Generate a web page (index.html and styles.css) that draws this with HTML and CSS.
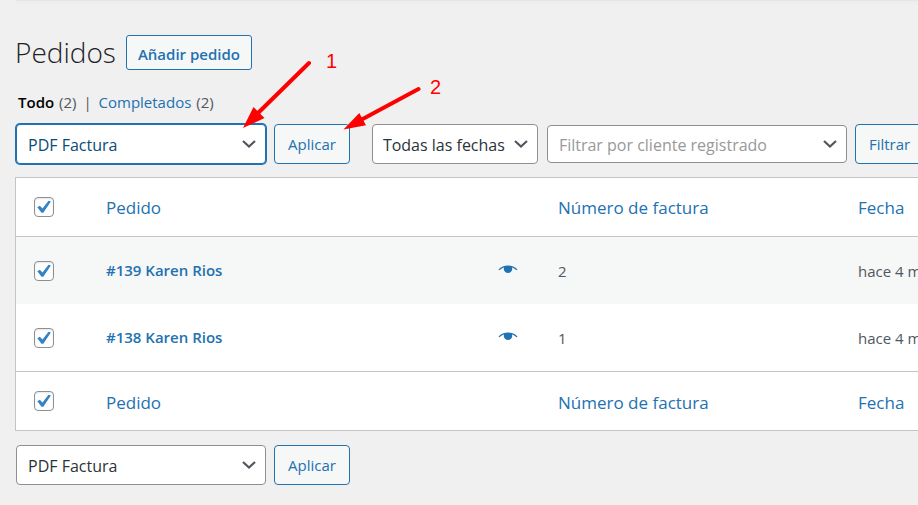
FILE: index.html
```html
<!DOCTYPE html>
<html lang="es">
<head>
    <meta charset="UTF-8">
    <meta name="viewport" content="width=device-width, initial-scale=1.0">
    <title>Pedidos</title>
    <link rel="stylesheet" href="styles.css">
</head>
<body>
    <div class="top-panel"></div>
    <main class="wrap">
        <header class="page-header">
            <h1>Pedidos</h1>
            <button type="button" class="button add-button">Añadir pedido</button>
        </header>
        <nav class="status-links">
            <a href="#" class="current">Todo</a> <span class="count">(2)</span>
            <span class="divider">|</span>
            <a href="#">Completados</a> <span class="count">(2)</span>
        </nav>
        <form class="tablenav">
            <select class="bulk-select focused" aria-label="Acciones en lote">
                <option>PDF Factura</option>
            </select>
            <button type="button" class="button">Aplicar</button>
            <select class="date-select" aria-label="Filtrar por fecha">
                <option>Todas las fechas</option>
            </select>
            <select class="customer-select" aria-label="Filtrar por cliente registrado">
                <option>Filtrar por cliente registrado</option>
            </select>
            <button type="button" class="button">Filtrar</button>
        </form>
        <table class="orders">
            <thead>
                <tr>
                    <th class="col-check"><input type="checkbox" aria-label="Seleccionar todo" checked></th>
                    <th><a href="#">Pedido</a></th>
                    <th class="col-invoice"><a href="#">Número de factura</a></th>
                    <th class="col-date"><a href="#">Fecha</a></th>
                </tr>
            </thead>
            <tbody>
                <tr>
                    <td><input type="checkbox" aria-label="Seleccionar pedido 139" checked></td>
                    <td>
                        <div class="order-cell">
                            <a href="#" class="order-link">#139 Karen Rios</a>
                            <a href="#" class="preview" aria-label="Vista previa">
                                <svg width="20" height="10" viewBox="0 0 20 10"><path d="M.5 4.500C3 1.800 6.300.5 10 .5s7 1.300 9.500 4l-.8.8C17.300 3.900 15.800 3 14 2.400c.1.500.2 1 .2 1.500a4.200 4.200 0 0 1-8.400 0c0-.5.1-1 .2-1.500C4.200 3 2.700 3.900 1.300 5.300z"/></svg>
                            </a>
                        </div>
                    </td>
                    <td>2</td>
                    <td>hace 4 meses</td>
                </tr>
                <tr>
                    <td><input type="checkbox" aria-label="Seleccionar pedido 138" checked></td>
                    <td>
                        <div class="order-cell">
                            <a href="#" class="order-link">#138 Karen Rios</a>
                            <a href="#" class="preview" aria-label="Vista previa">
                                <svg width="20" height="10" viewBox="0 0 20 10"><path d="M.5 4.500C3 1.800 6.300.5 10 .5s7 1.300 9.500 4l-.8.8C17.300 3.900 15.800 3 14 2.400c.1.500.2 1 .2 1.500a4.200 4.200 0 0 1-8.400 0c0-.5.1-1 .2-1.500C4.200 3 2.700 3.900 1.300 5.300z"/></svg>
                            </a>
                        </div>
                    </td>
                    <td>1</td>
                    <td>hace 4 meses</td>
                </tr>
            </tbody>
            <tfoot>
                <tr>
                    <th><input type="checkbox" aria-label="Seleccionar todo" checked></th>
                    <th><a href="#">Pedido</a></th>
                    <th><a href="#">Número de factura</a></th>
                    <th><a href="#">Fecha</a></th>
                </tr>
            </tfoot>
        </table>
        <form class="tablenav bottom">
            <select class="bulk-select" aria-label="Acciones en lote">
                <option>PDF Factura</option>
            </select>
            <button type="button" class="button">Aplicar</button>
        </form>
    </main>
    <!-- numbered steps drawn over the page -->
    <svg class="steps" width="460" height="140" viewBox="0 0 460 140">
        <path class="line" d="M309 63L256 115M418.500 89L359 121"/>
        <path d="M243 128L253.500 107L264.500 118ZM343.500 129.500L359.300 113L366 125.200Z"/>
        <text x="326" y="68">1</text>
        <text x="430" y="94">2</text>
    </svg>
</body>
</html>
```

FILE: styles.css
```css
* {
    box-sizing: border-box;
}
body {
    margin: 0;
    background: #f0f0f0;
    color: #50575e;
    font-family: "Open Sans", "Noto Sans", sans-serif;
    font-size: 15px;
    overflow: hidden;
    position: relative;
}
a {
    color: #2271b1;
    text-decoration: none;
}
.top-panel {
    height: 1px;
    margin-left: 16px;
    background: #e6e6e6;
    box-shadow: 0 1px 4px rgba(0, 0, 0, 0.08);
}
.wrap {
    padding: 34px 0 20px 15px;
}
.page-header {
    display: flex;
    align-items: center;
    gap: 10px;
}
h1 {
    margin: 0;
    color: #1d2327;
    font-size: 28px;
    font-weight: 360;
    line-height: 35px;
}
.button {
    flex: none;
    height: 40px;
    padding: 0 13px;
    border: 1px solid #2271b1;
    border-radius: 4px;
    background: #f6f7f7;
    color: #2271b1;
    font-family: inherit;
    font-size: 15px;
    cursor: pointer;
}
.add-button {
    height: 35px;
    padding: 2px 11px 0;
    border-radius: 3px;
    font-weight: 600;
}
.status-links {
    margin: 20px 0 9px 3px;
    line-height: 24px;
}
.status-links .current {
    color: #000;
    font-weight: 600;
}
.count {
    margin-left: 1px;
}
.divider {
    margin: 0 3px;
}
.tablenav {
    display: flex;
    align-items: center;
    gap: 8px;
    height: 42px;
    padding-left: 1px;
}
select {
    flex: none;
    appearance: none;
    height: 40px;
    padding: 1px 30px 0 11px;
    border: 1px solid #8c8f94;
    border-radius: 4px;
    background: #fff url('data:image/svg+xml;utf8,<svg xmlns="http://www.w3.org/2000/svg" width="16" height="10" viewBox="0 0 16 10"><path d="M2 2l6 5.500L14 2" fill="none" stroke="%2350575e" stroke-width="2.200"/></svg>') no-repeat right 8px center;
    color: #2c3338;
    font-family: inherit;
    font-size: 16px;
}
.bulk-select {
    width: 250px;
}
.focused {
    border-color: #2271b1;
    box-shadow: 0 0 0 1px #2271b1;
    color: #0a4b78;
}
.date-select {
    width: 166px;
    margin: 0 1px 0 14px;
    padding: 1px 10px 0;
}
.customer-select {
    width: 300px;
    height: 38px;
    color: #999;
}
.orders {
    width: 100%;
    margin-top: 12px;
    table-layout: fixed;
    border-collapse: separate;
    border-spacing: 0;
    border: 1px solid #c3c4c7;
    border-right: 0;
    background: #fff;
}
.orders th,
.orders td {
    padding: 0 0 0 16px;
    text-align: left;
    white-space: nowrap;
}
.orders th {
    height: 59px;
    font-size: 17px;
    font-weight: 380;
}
.orders td {
    height: 67px;
}
.orders thead th {
    border-bottom: 1px solid #c3c4c7;
}
.orders tfoot th {
    border-top: 1px solid #c3c4c7;
    padding-top: 3px;
}
.orders tbody tr:first-child {
    background: #f6f7f7;
}
.orders .col-check {
    width: 74px;
}
.orders .col-invoice {
    width: 300px;
}
.orders .col-date {
    width: 76px;
}
.orders th:first-child,
.orders td:first-child {
    padding: 0 0 0 18px;
}
.order-cell {
    display: flex;
    align-items: center;
    justify-content: space-between;
    padding: 0 24px 2px 0;
}
.order-link {
    font-weight: 600;
}
.preview svg {
    display: block;
    fill: #2271b1;
}
input[type="checkbox"] {
    appearance: none;
    display: block;
    width: 20px;
    height: 20px;
    margin: 0;
    border: 1px solid #8c8f94;
    border-radius: 4px;
    background: #fff url('data:image/svg+xml;utf8,<svg xmlns="http://www.w3.org/2000/svg" width="14" height="14" viewBox="0 0 14 14"><path d="M.3 7.200L2.800 5.800 5.500 8.500 11.500.8 13.900 1.500 6.300 12.700H4.500z" fill="%233582c4"/></svg>') no-repeat center;
    box-shadow: inset 0 1px 2px rgba(0, 0, 0, 0.1);
}
.bottom {
    margin-top: 13px;
}
.steps {
    position: absolute;
    top: 0;
    left: 0;
    fill: #f00;
    font-family: "Liberation Sans", Arial, sans-serif;
    font-size: 20px;
    pointer-events: none;
}
.steps .line {
    stroke: #f00;
    stroke-width: 4;
    stroke-linecap: round;
}
```
